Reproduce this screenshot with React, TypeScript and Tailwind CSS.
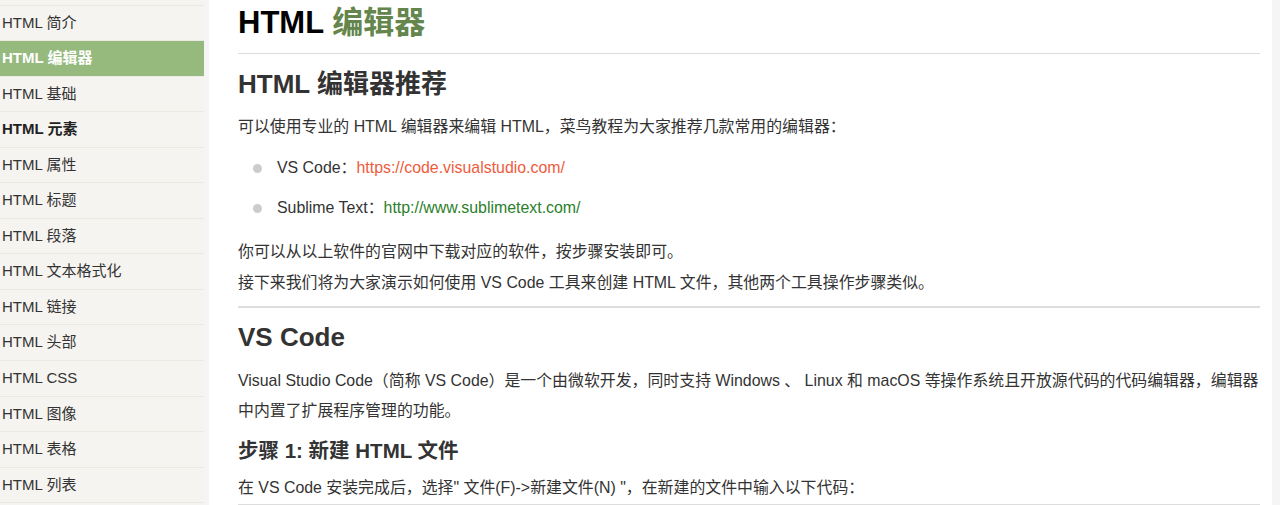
import React from "react";

const items = [
  "",
  "HTML 简介",
  "HTML 编辑器",
  "HTML 基础",
  "HTML 元素",
  "HTML 属性",
  "HTML 标题",
  "HTML 段落",
  "HTML 文本格式化",
  "HTML 链接",
  "HTML 头部",
  "HTML CSS",
  "HTML 图像",
  "HTML 表格",
  "HTML 列表",
  " ",
];

const font = { fontFamily: '"Liberation Sans", Arial, "Noto Sans CJK SC", sans-serif' };

export default function App() {
  return (
    <div className="flex h-[505px] w-[1280px] overflow-hidden bg-[#f5f5f5] text-[#333]" style={font}>
      <aside className="w-[204px] shrink-0 bg-[#f6f4f0]">
        <ul className="-mt-[30px]">
          {items.map((t, i) => {
            const active = t === "HTML 编辑器";
            const bold = t === "HTML 元素";
            return (
              <li
                key={i}
                className={
                  "flex h-[35.55px] items-center border-b border-[#ece9e3] pl-[2px] text-[15px] " +
                  (active ? "bg-[#96b97d] font-bold text-white" : bold ? "font-bold text-[#222]" : "text-[#333]")
                }
              >
                {t.trim()}
              </li>
            );
          })}
        </ul>
      </aside>
      <main className="ml-[5px] w-[1063px] shrink-0 bg-white pl-[29px] pr-[12px] pt-[4px] text-[15.9px]">
        <h1 className="text-[31px] font-bold leading-[37px] text-black">
          HTML <span className="text-[#64854c]">编辑器</span>
        </h1>
        <div className="mt-[12px] h-px bg-[#dcdcdc]" />
        <h2 className="mt-[14px] text-[26px] font-bold leading-[32px] text-[#333]">HTML 编辑器推荐</h2>
        <p className="mt-[12px] leading-[30px]">
          可以使用专业的 HTML 编辑器来编辑 HTML，菜鸟教程为大家推荐几款常用的编辑器：
        </p>
        <ul className="mt-[6px] pl-[15px]">
          <li className="flex h-[40px] items-center">
            <span className="mr-[15px] h-[9px] w-[9px] rounded-full bg-[#cccccc]" />
            VS Code：<span className="text-[#ee5b3d]">https://code.visualstudio.com/</span>
          </li>
          <li className="flex h-[40px] items-center">
            <span className="mr-[15px] h-[9px] w-[9px] rounded-full bg-[#cccccc]" />
            Sublime Text：<span className="text-[#2b7f2b]">http://www.sublimetext.com/</span>
          </li>
        </ul>
        <p className="mt-[8px] leading-[31px]">你可以从以上软件的官网中下载对应的软件，按步骤安装即可。</p>
        <p className="leading-[31px]">
          接下来我们将为大家演示如何使用 VS Code 工具来创建 HTML 文件，其他两个工具操作步骤类似。
        </p>
        <div className="mt-[8px] h-[2px] bg-[#dddddd]" />
        <h2 className="mt-[13px] text-[26px] font-bold leading-[32px] text-[#333]">VS Code</h2>
        <p className="mt-[13px] leading-[30px]">
          Visual Studio Code（简称 VS Code）是一个由微软开发，同时支持 Windows 、 Linux 和 macOS
          等操作系统且开放源代码的代码编辑器，编辑器中内置了扩展程序管理的功能。
        </p>
        <h3 className="mt-[12px] text-[20.5px] font-bold leading-[26px] text-[#333]">步骤 1: 新建 HTML 文件</h3>
        <p className="mt-[9px] leading-[30px]">
          在 VS Code 安装完成后，选择" 文件(F)-&gt;新建文件(N) "，在新建的文件中输入以下代码：
        </p>
        <div className="mt-[1px] h-px bg-[#dddddd]" />
      </main>
    </div>
  );
}
